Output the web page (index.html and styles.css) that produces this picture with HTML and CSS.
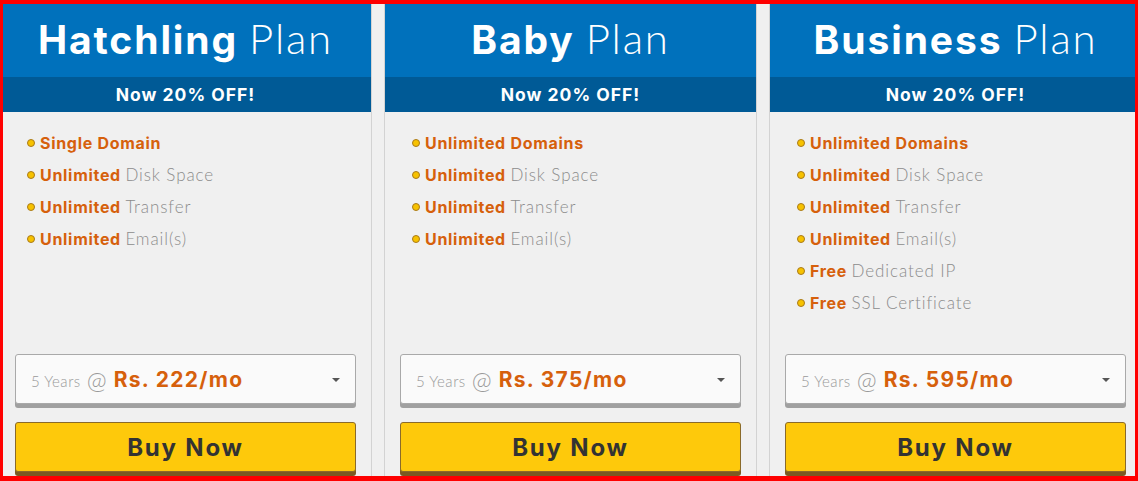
FILE: index.html
```html
<!DOCTYPE html>
<html lang="en">
<head>
<meta charset="utf-8">
<title>Plans</title>
<link rel="stylesheet" href="styles.css">
</head>
<body>
<div class="plans">
  <section class="plan">
    <header class="plan-head"><h2 class="plan-title"><b>Hatchling</b> <span class="light">Plan</span></h2></header>
    <div class="plan-offer">Now 20% OFF!</div>
    <div class="plan-body">
      <ul class="features">
        <li><b>Single Domain</b></li>
        <li><b>Unlimited</b> <span class="light">Disk Space</span></li>
        <li><b>Unlimited</b> <span class="light">Transfer</span></li>
        <li><b>Unlimited</b> <span class="light">Email(s)</span></li>
      </ul>
      <div class="term"><span class="term-years">5 Years</span><span class="term-at">@</span><span class="term-price">Rs. 222/mo</span><span class="caret"></span></div>
      <button class="buy">Buy Now</button>
    </div>
  </section>
  <section class="plan">
    <header class="plan-head"><h2 class="plan-title"><b>Baby</b> <span class="light">Plan</span></h2></header>
    <div class="plan-offer">Now 20% OFF!</div>
    <div class="plan-body">
      <ul class="features">
        <li><b>Unlimited Domains</b></li>
        <li><b>Unlimited</b> <span class="light">Disk Space</span></li>
        <li><b>Unlimited</b> <span class="light">Transfer</span></li>
        <li><b>Unlimited</b> <span class="light">Email(s)</span></li>
      </ul>
      <div class="term"><span class="term-years">5 Years</span><span class="term-at">@</span><span class="term-price">Rs. 375/mo</span><span class="caret"></span></div>
      <button class="buy">Buy Now</button>
    </div>
  </section>
  <section class="plan">
    <header class="plan-head"><h2 class="plan-title"><b>Business</b> <span class="light">Plan</span></h2></header>
    <div class="plan-offer">Now 20% OFF!</div>
    <div class="plan-body">
      <ul class="features">
        <li><b>Unlimited Domains</b></li>
        <li><b>Unlimited</b> <span class="light">Disk Space</span></li>
        <li><b>Unlimited</b> <span class="light">Transfer</span></li>
        <li><b>Unlimited</b> <span class="light">Email(s)</span></li>
        <li><b>Free</b> <span class="light">Dedicated IP</span></li>
        <li><b>Free</b> <span class="light">SSL Certificate</span></li>
      </ul>
      <div class="term"><span class="term-years">5 Years</span><span class="term-at">@</span><span class="term-price">Rs. 595/mo</span><span class="caret"></span></div>
      <button class="buy">Buy Now</button>
    </div>
  </section>
</div>
<div class="frame"></div>
</body>
</html>
```
FILE: styles.css
```css
html, body {
  margin: 0;
  padding: 0;
}
body {
  width: 1138px;
  height: 481px;
  overflow: hidden;
  background: #f0f0f0;
  font-family: Inter, "Open Sans", sans-serif;
  position: relative;
}
.light {
  font-family: Lato, Inter, sans-serif;
  font-weight: 300;
}
.plans {
  display: flex;
  gap: 12px;
  margin-left: -1px;
  padding-top: 4px;
}
.plan {
  flex: 0 0 371px;
  height: 490px;
  display: flex;
  flex-direction: column;
  background: #f0f0f0;
  border-left: 1px solid #d3d3d3;
  border-right: 1px solid #d3d3d3;
}
.plan-head {
  height: 73px;
  background: #0071bc;
  display: flex;
  align-items: center;
  justify-content: center;
}
.plan-title {
  margin: 0;
  color: #fff;
  font-size: 39px;
  font-weight: 400;
  white-space: nowrap;
  padding-bottom: 5px;
}
.plan-title b {
  font-weight: 700;
  letter-spacing: 1.9px;
}
.plan-title .light {
  font-size: 42px;
  letter-spacing: 1.8px;
}
.plan-offer {
  height: 35px;
  background: #005a96;
  color: #fff;
  font-weight: 700;
  font-size: 17.5px;
  letter-spacing: 1px;
  display: flex;
  align-items: center;
  justify-content: center;
}
.plan-body {
  flex: 1;
  display: flex;
  flex-direction: column;
  padding: 15px 15px 22px;
}
.features {
  list-style: none;
  margin: 0;
  padding: 0 0 0 12px;
  flex: 1;
}
.features li {
  position: relative;
  line-height: 32px;
  height: 32px;
  padding-left: 13px;
  font-size: 16px;
  color: #8c8c8c;
  white-space: nowrap;
}
.features li::before {
  content: "";
  position: absolute;
  left: 0;
  top: 12px;
  width: 6px;
  height: 6px;
  border-radius: 50%;
  background: #f7c200;
  border: 1px solid #a9791a;
}
.features b {
  color: #d6600c;
  font-weight: 700;
  letter-spacing: 0.7px;
}
.features .light {
  font-size: 17px;
  letter-spacing: 0.9px;
}
.term {
  position: relative;
  height: 48px;
  border: 1px solid #a9a9a9;
  border-radius: 3px;
  background: #fafafa;
  box-shadow: 0 4px 0 #a0a0a0;
  display: flex;
  align-items: center;
  padding: 0 15px;
  margin-bottom: 18px;
}
.term-years {
  font-family: Lato, Inter, sans-serif;
  font-size: 15px;
  font-weight: 300;
  letter-spacing: 0.5px;
  color: #999;
  margin-top: 4px;
}
.term-at {
  font-family: Lato, Inter, sans-serif;
  font-size: 24px;
  font-weight: 300;
  color: #999;
  margin: 0 7px 0 6px;
}
.term-price {
  font-size: 21px;
  font-weight: 700;
  letter-spacing: 1.3px;
  color: #d6600c;
  margin-top: 1px;
}
.caret {
  position: absolute;
  right: 15px;
  top: 23px;
  border-left: 4px solid transparent;
  border-right: 4px solid transparent;
  border-top: 4px solid #555;
}
.buy {
  height: 50px;
  width: 100%;
  border: 1px solid #8a6a2a;
  border-radius: 3px;
  background: #fec90b;
  box-shadow: 0 4px 0 #7b5a22;
  font-family: inherit;
  font-size: 24px;
  font-weight: 700;
  color: #333;
  letter-spacing: 1.8px;
  padding: 0;
  cursor: pointer;
}
.frame {
  position: absolute;
  inset: 0;
  border-style: solid;
  border-color: #ff0000;
  border-width: 4px 3px 5px 3px;
  pointer-events: none;
}
```
